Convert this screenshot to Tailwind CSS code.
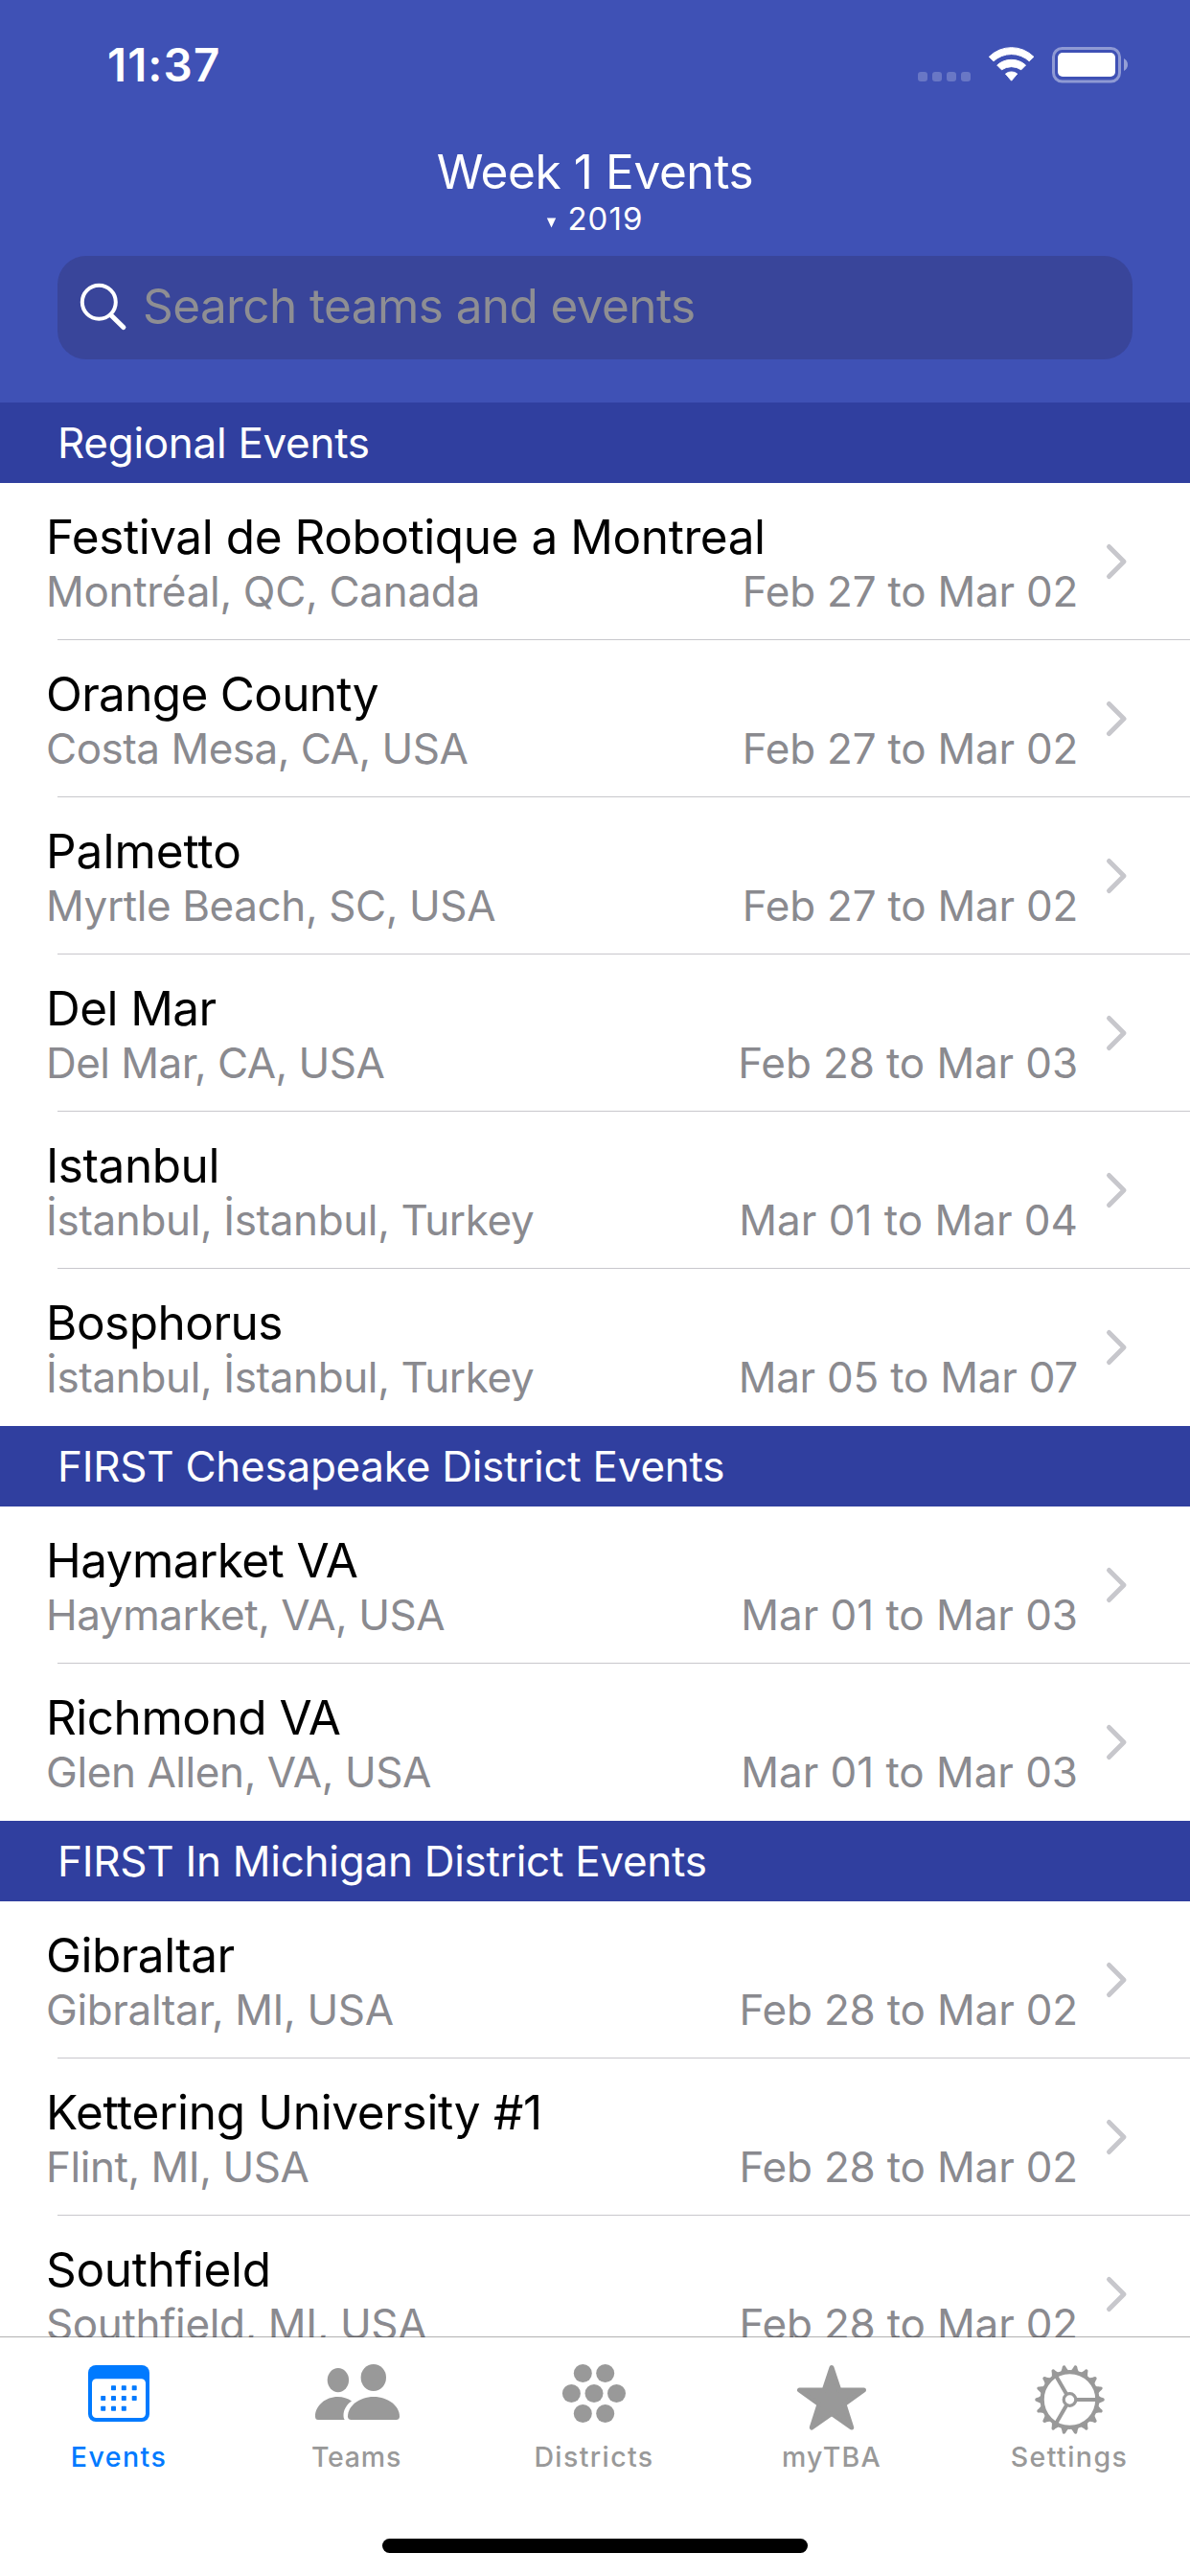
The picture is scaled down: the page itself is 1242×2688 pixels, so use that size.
<!DOCTYPE html>
<html lang="en">
<head>
<meta charset="utf-8">
<title>Week 1 Events</title>
<script src="https://cdn.jsdelivr.net/npm/@tailwindcss/browser@4"></script>
</head>
<body class="bg-white">
<div class="flex h-[2688px] w-[1242px] flex-col overflow-hidden bg-white font-['Inter',sans-serif]">

  <header class="h-[420px] shrink-0 bg-[#3f51b5] text-white">
    <!-- Status bar -->
    <div class="flex h-[149px] items-start justify-between pt-[38px] pl-28 pr-[62px]">
      <div class="text-[47.5px] leading-[60px] font-semibold tracking-[1.1px]">11:37</div>
      <svg class="mt-[7px] h-[45px] w-[224px]" viewBox="956 45 224 45" fill="#fff">
        <g fill-opacity=".22">
          <rect x="958" y="75" width="10" height="10" rx="3"/><rect x="973" y="75" width="10" height="10" rx="3"/><rect x="988" y="75" width="10" height="10" rx="3"/><rect x="1003" y="75" width="10" height="10" rx="3"/>
        </g>
        <g stroke="#fff" stroke-width="1" stroke-linejoin="round">
          <path d="M1032.3 59.3A33 33 0 0 1 1078.9 59.3L1074.2 63.8A27.500 27.500 0 0 0 1037 63.800Z"/>
          <path d="M1040.700 68A22.500 22.500 0 0 1 1070.500 68L1065.800 72.800A18 18 0 0 0 1045.400 72.800Z"/>
          <path d="M1049.500 77A10 10 0 0 1 1061.700 77L1055.600 84.200Z"/>
        </g>
        <rect x="1099.500" y="50.500" width="69" height="34.500" rx="9" fill="none" stroke="#fff" stroke-opacity=".42" stroke-width="3"/>
        <rect x="1104" y="55" width="60" height="25" rx="5"/>
        <path d="M1173 61C1178.300 63.500 1178.300 71.500 1173 74Z" fill-opacity=".45"/>
      </svg>
    </div>
    <!-- Title and season -->
    <div class="text-center text-[49.5px] leading-[60px] tracking-[-0.4px]">Week 1 Events</div>
    <div class="flex items-center justify-center gap-[11px]">
      <svg class="mt-[9px] h-[11px] w-[11px]" viewBox="0 0 11 11" fill="#fff"><path d="M.8 .5H10.200L5.500 10.500Z"/></svg>
      <div class="text-[33px] leading-[38px] tracking-[1.1px]">2019</div>
    </div>
    <!-- Search -->
    <div class="mx-[60px] mt-5 flex h-[108px] items-center rounded-[30px] bg-[#39459a] pl-[22px]">
      <svg class="h-[52px] w-[52px] shrink-0" viewBox="82 295 52 52" fill="none" stroke="#fff" stroke-linecap="round">
        <circle cx="103.300" cy="315.300" r="17.500" stroke-width="4"/>
        <path d="M116 329L128.800 341.500" stroke-width="5.200"/>
      </svg>
      <div class="pb-1 pl-[15px] text-[49.5px] leading-[60px] tracking-[-0.6px] text-[#8e8e93]">Search teams and events</div>
    </div>
  </header>

  <main id="list" class="min-h-0 flex-1 overflow-hidden"></main>

  <!-- Tab bar -->
  <nav class="relative -mt-px h-[250px] shrink-0 border-t border-black/30 bg-white bg-clip-padding">
    <div class="grid grid-cols-5 pt-[25px] pr-0.5 text-[28.5px] leading-[37px] font-medium text-[#999]">
      <div class="flex flex-col items-center text-[#007aff]">
        <svg class="h-[76px] w-[100px]" viewBox="74 2464 100 76" fill="currentColor">
          <rect x="92" y="2468" width="64" height="59" rx="8"/>
          <rect x="96" y="2482.300" width="56" height="40.700" rx="4.500" fill="#fff"/>
          <g><rect x="116" y="2489.300" width="5" height="5" rx=".7"/><rect x="126.800" y="2489.300" width="5" height="5" rx=".7"/><rect x="137.700" y="2489.300" width="5" height="5" rx=".7"/>
          <rect x="105.200" y="2500" width="5" height="5" rx=".7"/><rect x="116" y="2500" width="5" height="5" rx=".7"/><rect x="126.800" y="2500" width="5" height="5" rx=".7"/><rect x="137.700" y="2500" width="5" height="5" rx=".7"/>
          <rect x="105.200" y="2510.800" width="5" height="5" rx=".7"/><rect x="116" y="2510.800" width="5" height="5" rx=".7"/><rect x="126.800" y="2510.800" width="5" height="5" rx=".7"/></g>
        </svg>
        <div class="mt-[5px] tracking-[1.45px]">Events</div>
      </div>
      <div class="flex flex-col items-center">
        <svg class="h-[76px] w-[100px]" viewBox="322 2464 100 76" fill="currentColor">
          <ellipse cx="352.900" cy="2483.600" rx="11.200" ry="12.600"/>
          <ellipse cx="389.800" cy="2481" rx="13.200" ry="14"/>
          <path d="M332 2525C330 2525 329 2524 329 2521.500C329 2510 340 2501 352.500 2501C358 2501 363 2502.500 367 2505.500C361 2509.500 358.500 2515.500 358.500 2520.500C358.500 2522.500 359 2524 359.800 2525Z"/>
          <path d="M366.500 2525C364.500 2525 363 2524 363 2521.500C363 2511 374.500 2501 390 2501C405.500 2501 417 2511 417 2521.500C417 2524 415.500 2525 413.500 2525Z"/>
        </svg>
        <div class="mt-[5px] tracking-[0.8px]">Teams</div>
      </div>
      <div class="flex flex-col items-center">
        <svg class="h-[76px] w-[100px]" viewBox="570 2464 100 76" fill="currentColor">
          <circle cx="608.300" cy="2476.500" r="9.500"/><circle cx="631.700" cy="2476.500" r="9.500"/>
          <circle cx="596.400" cy="2497.500" r="9.500"/><circle cx="620" cy="2497.500" r="9.500"/><circle cx="643.500" cy="2497.500" r="9.500"/>
          <circle cx="608.300" cy="2518.500" r="9.500"/><circle cx="631.700" cy="2518.500" r="9.500"/>
        </svg>
        <div class="mt-[5px] tracking-[1.4px]">Districts</div>
      </div>
      <div class="flex flex-col items-center">
        <svg class="h-[76px] w-[100px]" viewBox="818 2464 100 76" fill="currentColor" stroke="currentColor" stroke-width="5" stroke-linejoin="round">
          <path d="M868 2470.500L875.800 2494H901.500L881 2508.700L888.700 2533L868 2518.500L847.300 2533L855 2508.700L834.500 2494H860.200Z"/>
        </svg>
        <div class="mt-[5px] tracking-[1.25px]">myTBA</div>
      </div>
      <div class="flex flex-col items-center">
        <svg class="h-[80px] w-[100px]" viewBox="-50.500 -40 100 80" fill="currentColor">
          <defs><path id="tooth" d="M29 -4.600C31.500 -3.500 33 -2.200 34.500 -1.900Q36.300 -1.500 36.300 0Q36.300 1.500 34.500 1.900C33 2.200 31.500 3.500 29 4.600Z"/></defs>
          <use href="#tooth"/><use href="#tooth" transform="rotate(20)"/><use href="#tooth" transform="rotate(40)"/><use href="#tooth" transform="rotate(60)"/><use href="#tooth" transform="rotate(80)"/><use href="#tooth" transform="rotate(100)"/><use href="#tooth" transform="rotate(120)"/><use href="#tooth" transform="rotate(140)"/><use href="#tooth" transform="rotate(160)"/><use href="#tooth" transform="rotate(180)"/><use href="#tooth" transform="rotate(200)"/><use href="#tooth" transform="rotate(220)"/><use href="#tooth" transform="rotate(240)"/><use href="#tooth" transform="rotate(260)"/><use href="#tooth" transform="rotate(280)"/><use href="#tooth" transform="rotate(300)"/><use href="#tooth" transform="rotate(320)"/><use href="#tooth" transform="rotate(340)"/>
          <g fill="none" stroke="currentColor">
            <circle r="28.800" stroke-width="4.200"/>
            <circle r="6.300" stroke-width="3.200"/>
            <path d="M7 0H29M-3.500 6.060L-14.500 25.110M-3.500 -6.060L-14.500 -25.110" stroke-width="4"/>
          </g>
        </svg>
        <div class="mt-px tracking-[1.45px]">Settings</div>
      </div>
    </div>
    <div class="mx-auto mt-[67px] h-[15px] w-[444px] rounded-full bg-black"></div>
  </nav>
</div>

<script>
// Each event: name, name tracking, location, location tracking, dates, dates tracking
const sections = [
  { title: 'Regional Events', cls: 'tracking-[-0.3px]', events: [
    ['Festival de Robotique a Montreal', 'tracking-[-0.44px]', 'Montréal, QC, Canada', 'tracking-[-0.3px]', 'Feb 27 to Mar 02', 'tracking-[-0.24px]'],
    ['Orange County', 'tracking-[-0.7px]', 'Costa Mesa, CA, USA', 'tracking-[-0.5px]', 'Feb 27 to Mar 02', 'tracking-[-0.24px]'],
    ['Palmetto', 'tracking-[0px]', 'Myrtle Beach, SC, USA', 'tracking-[-0.4px]', 'Feb 27 to Mar 02', 'tracking-[-0.24px]'],
    ['Del Mar', 'tracking-[-0.58px]', 'Del Mar, CA, USA', 'tracking-[-0.53px]', 'Feb 28 to Mar 03', 'tracking-[-0.12px]'],
    ['Istanbul', 'tracking-[-0.44px]', 'İstanbul, İstanbul, Turkey', 'tracking-[-0.38px]', 'Mar 01 to Mar 04', 'tracking-[0px]'],
    ['Bosphorus', 'tracking-[-0.5px]', 'İstanbul, İstanbul, Turkey', 'tracking-[-0.38px]', 'Mar 05 to Mar 07', 'tracking-[-0.24px]'],
  ]},
  { title: 'FIRST Chesapeake District Events', cls: 'tracking-[-0.27px]', events: [
    ['Haymarket VA', 'tracking-[-0.58px]', 'Haymarket, VA, USA', 'tracking-[-0.45px]', 'Mar 01 to Mar 03', 'tracking-[-0.05px]'],
    ['Richmond VA', 'tracking-[-0.5px]', 'Glen Allen, VA, USA', 'tracking-[-0.42px]', 'Mar 01 to Mar 03', 'tracking-[-0.05px]'],
  ]},
  { title: 'FIRST In Michigan District Events', cls: 'tracking-[-0.27px]', events: [
    ['Gibraltar', 'tracking-[-0.5px]', 'Gibraltar, MI, USA', 'tracking-[-0.36px]', 'Feb 28 to Mar 02', 'tracking-[-0.17px]'],
    ['Kettering University #1', 'tracking-[-0.34px]', 'Flint, MI, USA', 'tracking-[-0.45px]', 'Feb 28 to Mar 02', 'tracking-[-0.17px]'],
    ['Southfield', 'tracking-[-0.3px]', 'Southfield, MI, USA', 'tracking-[-0.37px]', 'Feb 28 to Mar 02', 'tracking-[-0.17px]'],
  ]},
];

const row = ([name, nameCls, place, placeCls, dates, datesCls], i, all) => `
  <li class="flex h-[164px] flex-col">
    <div class="flex flex-1 items-start pl-12 pr-16">
      <div class="flex-1 pt-[25px]">
        <div class="text-[49.5px] leading-[62px] text-black ${nameCls}">${name}</div>
        <div class="flex justify-between text-[44px] leading-[52px] text-[#8a8a8f]">
          <span class="${placeCls}">${place}</span><span class="${datesCls}">${dates}</span>
        </div>
      </div>
      <svg class="mt-[62px] ml-7 h-10 w-[25px] shrink-0" viewBox="0 0 25 40" fill="none" stroke="#c7c7cc" stroke-width="5" stroke-linecap="round" stroke-linejoin="round"><path d="M4.500 4.500L20 20L4.500 35.500"/></svg>
    </div>
    ${i < all.length - 1 ? '<div class="ml-[60px] h-px bg-[#c8c7cc]"></div>' : ''}
  </li>`;

document.getElementById('list').innerHTML = sections.map(s => `
  <section>
    <h2 class="h-21 bg-[#303f9f] pl-[60px] text-[44px] leading-[84px] text-white ${s.cls}">${s.title}</h2>
    <ul>${s.events.map(row).join('')}</ul>
  </section>`).join('');
</script>
</body>
</html>
